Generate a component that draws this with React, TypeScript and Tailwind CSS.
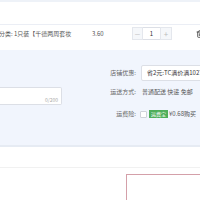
import { Trash2 } from 'lucide-react'

const font = { fontFamily: '"Noto Sans CJK SC", "Noto Sans", sans-serif' }

function Stepper() {
  return (
    <div className="flex h-[13px]">
      <div className="flex w-[11px] items-center justify-center border border-[#e4e7ed] bg-[#f5f7fa] text-[6px] text-[#aaa]">—</div>
      <div className="flex w-[17px] items-center justify-center border-y border-[#dcdfe6] bg-white text-[6px] text-[#333]">1</div>
      <div className="flex w-[12px] items-center justify-center border border-[#e4e7ed] bg-[#f5f7fa] text-[8px] leading-none text-[#bbb]">+</div>
    </div>
  )
}

export default function App() {
  return (
    <div className="h-[200px] w-[200px] overflow-hidden bg-white" style={font}>
      <div className="h-[2px] bg-[#eef2f8]" />
      <div className="h-[22px]" />

      <div className="flex h-[26px] border-t border-[#ebeef5] pt-[2px]">
        <div className="-ml-[13px] mt-[3px] w-[105px] shrink-0 whitespace-nowrap text-[6px] leading-[8px] text-[#555]">
          颜色分类: 1只装【千德两周套妆
        </div>
        <div className="mt-[3px] w-[40px] shrink-0 text-[6px] leading-[8px] text-[#555]">3.60</div>
        <Stepper />
        <div className="ml-[24px] mt-[3px]">
          <Trash2 size={8} strokeWidth={2.5} className="text-[#444]" />
        </div>
      </div>

      <div className="flex h-[97px] border-b-2 border-[#e6ebf3] bg-[#f1f5fd]">
        <div className="w-[102px] shrink-0">
          <div className="relative mt-[37px] h-[18px] w-[62px] rounded-r-[2px] border-y border-r border-[#dcdfe6] bg-white">
            <span className="absolute bottom-[1px] right-[3px] text-[5px] leading-[6px] text-[#aaa]">0/200</span>
          </div>
        </div>
        <div className="flex flex-1 flex-col pt-[15px] text-[6px] leading-[8px]">
          <div className="flex h-[16px] items-center">
            <span className="w-[34px] shrink-0 text-right text-[#666]">店铺优惠:</span>
            <div className="ml-[5px] flex h-[16px] w-[70px] shrink-0 items-center overflow-hidden whitespace-nowrap rounded-[2px] border border-[#dcdfe6] bg-white pl-[5px] text-[#333]">
              省2元:TC满价满1027元减2元
            </div>
          </div>
          <div className="mt-[3px] flex h-[16px] items-center">
            <span className="w-[34px] shrink-0 text-right text-[#666]">运送方式:</span>
            <span className="ml-[6px] whitespace-nowrap text-[#555]">普通配送 快递 免邮</span>
          </div>
          <div className="mt-[6px] flex h-[16px] items-center">
            <span className="w-[34px] shrink-0 text-right text-[#666]">运费险:</span>
            <span className="ml-[4px] h-[7px] w-[7px] shrink-0 rounded-[1px] border border-[#cfd3da] bg-white" />
            <span className="ml-[2px] whitespace-nowrap bg-[#4fae5a] px-[2px] text-[5px] leading-[8px] text-white">运费宝</span>
            <span className="ml-[1px] whitespace-nowrap text-[#555]">¥0.68购买</span>
          </div>
        </div>
      </div>

      <div className="h-[20px]" />
      <div className="h-[7px] border-t border-[#f1f1f1]" />
      <div className="ml-[126px] h-[40px] w-[90px] border border-[#d4a0a9] bg-white" />
    </div>
  )
}
